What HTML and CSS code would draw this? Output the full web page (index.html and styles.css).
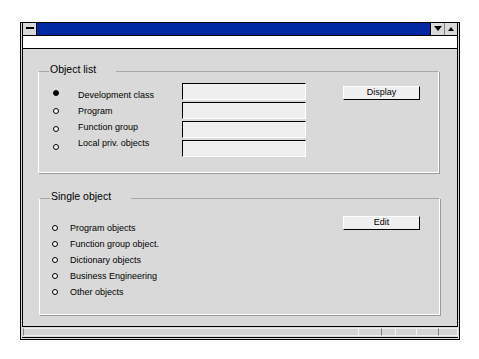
FILE: index.html
```html
<!DOCTYPE html>
<html>
<head>
<meta charset="utf-8">
<link rel="stylesheet" href="styles.css">
</head>
<body>
<div class="window">
  <div class="titlebar">
    <div class="sysbtn"><span class="dash"></span></div>
    <div class="title"></div>
    <div class="tbtn"><svg width="8" height="5" viewBox="0 0 8 5"><path d="M0 0H8L4 5Z" fill="#000"/></svg></div>
    <div class="tbtn tbtn-up"><svg width="6" height="4" viewBox="0 0 6 4"><path d="M0 4H6L3 0Z" fill="#000"/></svg></div>
  </div>
  <div class="menubar"></div>
  <div class="client">
    <fieldset class="group group-list">
      <legend>Object list</legend>
      <div class="list-body">
        <div class="radios">
          <span class="radio on"></span>
          <span class="radio"></span>
          <span class="radio"></span>
          <span class="radio"></span>
        </div>
        <div class="labels">
          <div>Development class</div>
          <div>Program</div>
          <div>Function group</div>
          <div>Local priv. objects</div>
        </div>
        <div class="inputs">
          <div class="field"></div>
          <div class="field"></div>
          <div class="field"></div>
          <div class="field"></div>
        </div>
        <div class="btn btn-display">Display</div>
      </div>
    </fieldset>
    <fieldset class="group group-single">
      <legend>Single object</legend>
      <div class="single-body">
        <div class="options">
          <div class="opt"><span class="radio"></span><span>Program objects</span></div>
          <div class="opt"><span class="radio"></span><span>Function group object.</span></div>
          <div class="opt"><span class="radio"></span><span>Dictionary objects</span></div>
          <div class="opt"><span class="radio"></span><span>Business Engineering</span></div>
          <div class="opt"><span class="radio"></span><span>Other objects</span></div>
        </div>
        <div class="btn btn-edit">Edit</div>
      </div>
    </fieldset>
  </div>
  <div class="statusbar">
    <div class="seg seg-main"></div>
    <div class="seg seg-a"></div>
    <div class="seg seg-b"></div>
    <div class="seg seg-c"></div>
    <div class="seg seg-d"></div>
    <div class="seg seg-e"></div>
  </div>
</div>
</body>
</html>
```

FILE: styles.css
```css
* { box-sizing: border-box; }
html, body { margin: 0; padding: 0; background: #fff; }
body {
  font-family: "Liberation Sans", Arial, sans-serif;
  font-size: 9px;
  color: #000;
}
.window {
  margin: 22px 0 0 20px;
  width: 440px;
  height: 318px;
  border: 1px solid #000;
  padding: 0 1px 1px 1px;
  background: #d9d9d9;
  display: flex;
  flex-direction: column;
}
.titlebar {
  height: 13px;
  display: flex;
  border-left: 1px solid #000;
  border-right: 1px solid #000;
  border-bottom: 1px solid #000;
}
.sysbtn {
  width: 14px;
  background: #d9d9d9;
  border-right: 1px solid #000;
  display: flex;
  align-items: center;
  justify-content: center;
}
.dash { display: block; width: 8px; height: 2px; background: #000; margin-top: -1px; }
.title { flex: 1; background: #0028a0; border-right: 1px solid #000; }
.tbtn {
  width: 14px;
  background: #d9d9d9;
  display: flex;
  align-items: center;
  justify-content: center;
  border-right: 1px solid #808080;
}
.tbtn-up { width: 12px; border-right: 0; }
.menubar {
  height: 13px;
  background: #fff;
  border-left: 1px solid #000;
  border-right: 1px solid #000;
  border-bottom: 1px solid #000;
}
.client {
  height: 279px;
  border-left: 1px solid #000;
  border-right: 1px solid #000;
  border-bottom: 1px solid #000;
  padding-top: 14px;
}
.group {
  margin: 0 0 0 15px;
  padding: 0;
  width: 401px;
  border: 1px solid #fff;
  border-top-color: #a8a8a8;
  box-shadow: 1px 1px 0 #9a9a9a;
  min-width: 0;
}
.group legend {
  font-size: 10.5px;
  line-height: 12px;
  padding: 0 20px 6px 1px;
  margin-left: 10px;
}
.group-list { height: 110px; }
.group-single { height: 125px; margin-top: 17px; margin-left: 16px; }

.list-body { display: flex; align-items: flex-start; }
.radios {
  display: flex;
  flex-direction: column;
  gap: 12px;
  margin-left: 14px;
  padding-top: 9px;
}
.radio {
  display: block;
  width: 6px;
  height: 6px;
  border-radius: 50%;
  border: 1px solid #000;
  background: #f4f4f4;
  flex: none;
}
.radio.on { background: #000; }
.labels {
  margin-left: 19px;
  width: 104px;
  padding-top: 6px;
  line-height: 16px;
  white-space: nowrap;
}
.inputs {
  display: flex;
  flex-direction: column;
  gap: 2px;
  padding-top: 2px;
}
.field {
  width: 124px;
  height: 17px;
  background: #efefef;
  border-top: 1px solid #000;
  border-left: 1px solid #000;
  border-bottom: 1px solid #fff;
  border-right: 1px solid #fff;
}
.btn {
  width: 77px;
  height: 14px;
  background: #efefef;
  border-top: 1px solid #fff;
  border-left: 1px solid #fff;
  border-right: 1px solid #000;
  border-bottom: 1px solid #000;
  text-align: center;
  line-height: 11px;
  font-size: 9px;
}
.btn-display { margin-left: 37px; margin-top: 5px; }

.single-body { display: flex; align-items: flex-start; }
.options {
  width: 303px;
  padding-top: 12px;
  padding-left: 12px;
}
.opt {
  height: 16px;
  display: flex;
  align-items: center;
  gap: 12px;
  white-space: nowrap;
}
.btn-edit { margin-top: 8px; }

.statusbar {
  flex: 1;
  display: flex;
  padding: 1px 0 1px 1px;
  border-bottom: 1px solid #000;
}
.seg {
  height: 8px;
  background: #d4d4d4;
  border-top: 1px solid #efefef;
  border-bottom: 1px solid #efefef;
}
.seg-main { width: 335px; border-left: 1px solid #808080; }
.seg-a { width: 23px; border-left: 1px solid #f4f4f4; }
.seg-b { width: 14px; border-left: 1px solid #808080; }
.seg-c { width: 21px; border-left: 1px solid #f4f4f4; }
.seg-d { width: 22px; border-left: 1px solid #f4f4f4; }
.seg-e { flex: 1; border-left: 1px solid #808080; border-right: 1px solid #efefef; }
```
